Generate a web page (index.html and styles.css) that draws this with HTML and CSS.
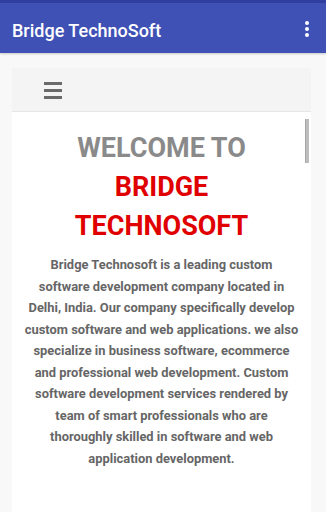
FILE: index.html
```html
<!DOCTYPE html>
<html lang="en">
<head>
    <meta charset="UTF-8">
    <meta name="viewport" content="width=device-width, initial-scale=1.0">
    <title>Bridge TechnoSoft</title>
    <link rel="stylesheet" href="styles.css">
</head>
<body>
    <!-- Status bar + app bar -->
    <div class="status-bar"></div>
    <header class="app-bar">
        <span class="app-title">Bridge TechnoSoft</span>
        <span class="menu-dots">
            <i></i><i></i><i></i>
        </span>
    </header>

    <!-- Web view -->
    <div class="page">
        <div class="card">
            <div class="nav-head">
                <span class="burger"><i></i><i></i><i></i></span>
            </div>
            <div class="content">
                <span class="scroll-thumb"></span>
                <h1 class="welcome">WELCOME TO</h1>
                <h2 class="brand">BRIDGE<br>TECHNOSOFT</h2>
                <p class="intro">Bridge Technosoft is a leading custom<br>
                    software development company located in<br>
                    Delhi, India. Our company specifically develop<br>
                    custom software and web applications. we also<br>
                    specialize in business software, ecommerce<br>
                    and professional web development. Custom<br>
                    software development services rendered by<br>
                    team of smart professionals who are<br>
                    thoroughly skilled in software and web<br>
                    application development.</p>
            </div>
        </div>
    </div>
</body>
</html>
```

FILE: styles.css
```css
/* Basic reset */
* {
    margin: 0;
    padding: 0;
    box-sizing: border-box;
}

body {
    width: 326px;
    height: 512px;
    overflow: hidden;
    background-color: #f8f8f8;
    font-family: Roboto, "Liberation Sans", sans-serif;
}

/* Android status bar */
.status-bar {
    height: 3px;
    background-color: #303f9f;
}

/* Toolbar */
.app-bar {
    height: 50px;
    background-color: #3f51b5;
    display: flex;
    align-items: center;
    justify-content: space-between;
    padding: 0 17px 0 12px;
    box-shadow: 0 1px 2px rgba(0, 0, 0, 0.2);
}

.app-title {
    color: #ffffff;
    font-size: 18px;
    font-weight: 500;
    margin-top: 4px;
}

.menu-dots {
    display: flex;
    flex-direction: column;
    gap: 2px;
    margin-top: 2px;
}

.menu-dots i {
    display: block;
    width: 4px;
    height: 4px;
    border-radius: 50%;
    background-color: #ffffff;
}

/* Page area */
.page {
    padding: 15px 15px 0 12px;
}

.card {
    background-color: #ffffff;
    height: 460px;
}

.nav-head {
    height: 44px;
    background-color: #f4f4f4;
    border-bottom: 1px solid #e6e6e6;
    display: flex;
    align-items: center;
    padding-left: 32px;
}

.burger {
    display: flex;
    flex-direction: column;
    gap: 4px;
    margin-top: 1px;
}

.burger i {
    display: block;
    width: 18px;
    height: 3px;
    background-color: #6a6a6a;
}

/* Main text */
.content {
    position: relative;
    text-align: center;
    padding: 17px 6px 0 6px;
}

.scroll-thumb {
    position: absolute;
    top: 7px;
    right: 2px;
    width: 4px;
    height: 44px;
    background-color: #bdbdbd;
    border-left: 1px solid #a8a8a8;
}

.welcome {
    font-size: 27px;
    font-weight: 700;
    line-height: 39px;
    color: #8a8a8a;
}

.brand {
    font-size: 27px;
    font-weight: 700;
    line-height: 39px;
    color: #e00000;
}

.intro {
    margin-top: 8px;
    font-size: 12.9px;
    font-weight: 700;
    line-height: 21.5px;
    color: #666666;
}
```
